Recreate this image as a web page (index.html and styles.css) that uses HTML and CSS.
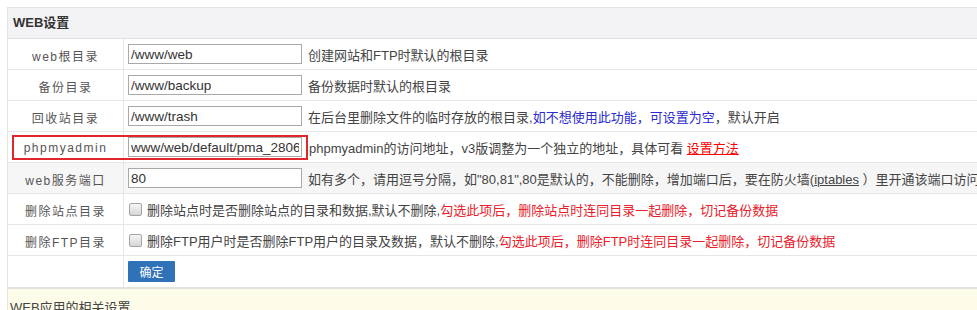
FILE: index.html
```html
<!DOCTYPE html>
<html lang="zh-CN">
<head>
    <meta charset="UTF-8">
    <title>WEB设置</title>
    <link rel="stylesheet" href="styles.css">
</head>
<body>
    <div class="page">
        <div class="panel">
            <!-- Заголовок -->
            <div class="panel-title">WEB设置</div>

            <div class="row">
                <div class="label">web根目录</div>
                <div class="value">
                    <input class="text-input" type="text" value="/www/web">
                    <span class="desc">创建网站和FTP时默认的根目录</span>
                </div>
            </div>

            <div class="row">
                <div class="label">备份目录</div>
                <div class="value">
                    <input class="text-input" type="text" value="/www/backup">
                    <span class="desc">备份数据时默认的根目录</span>
                </div>
            </div>

            <div class="row">
                <div class="label">回收站目录</div>
                <div class="value">
                    <input class="text-input" type="text" value="/www/trash">
                    <span class="desc">在后台里删除文件的临时存放的根目录,<span class="blue">如不想使用此功能，可设置为空</span>，默认开启</span>
                </div>
            </div>

            <div class="row">
                <div class="label">phpmyadmin</div>
                <div class="value">
                    <input class="text-input" type="text" value="www/web/default/pma_28060b1f2c">
                    <span class="desc desc-tight">phpmyadmin的访问地址，v3版调整为一个独立的地址，具体可看 <a class="red-link" href="#">设置方法</a></span>
                </div>
            </div>

            <div class="row row-hover">
                <div class="label">web服务端口</div>
                <div class="value">
                    <input class="text-input" type="text" value="80">
                    <span class="desc">如有多个，请用逗号分隔，如"80,81",80是默认的，不能删除，增加端口后，要在防火墙(<u>iptables</u> ）里开通该端口访问</span>
                </div>
            </div>

            <div class="row">
                <div class="label">删除站点目录</div>
                <div class="value">
                    <input class="check" type="checkbox">
                    <span class="desc desc-check">删除站点时是否删除站点的目录和数据,默认不删除,<span class="red">勾选此项后，删除站点时连同目录一起删除，切记备份数据</span></span>
                </div>
            </div>

            <div class="row">
                <div class="label">删除FTP目录</div>
                <div class="value">
                    <input class="check" type="checkbox">
                    <span class="desc desc-check">删除FTP用户时是否删除FTP用户的目录及数据，默认不删除,<span class="red">勾选此项后，删除FTP时连同目录一起删除，切记备份数据</span></span>
                </div>
            </div>

            <div class="row row-button">
                <div class="label"></div>
                <div class="value">
                    <button class="btn">确定</button>
                </div>
            </div>

            <!-- Подсказка -->
            <div class="notice">WEB应用的相关设置</div>

            <!-- Красная рамка вокруг phpmyadmin -->
            <div class="mark"></div>
        </div>
    </div>
</body>
</html>
```

FILE: styles.css
```css
html, body {
    overflow: hidden;
}

body {
    margin: 0;
    background-color: #fff;
    font-family: "Liberation Sans", "Noto Sans CJK SC", sans-serif;
    color: #444;
}

.page {
    padding: 7px 0 0 7px;
}

/* Блок настроек */
.panel {
    position: relative;
    width: 1200px;
    border: 1px solid #e4e4e4;
    border-bottom: none;
}

.panel-title {
    height: 30px;
    line-height: 30px;
    padding-left: 5px;
    background-color: #f3f3f5;
    border-bottom: 1px solid #e0e0e2;
    font-size: 13px;
    font-weight: bold;
    color: #333;
}

.row {
    display: flex;
    height: 31px;
    box-sizing: border-box;
    border-bottom: 1px solid #e6e6e6;
}

.row-hover {
    background-color: #f6f6f6;
}

.row-button {
    height: 33px;
    border-bottom: 2px solid #e2e2e2;
}

.label {
    width: 116px;
    flex-shrink: 0;
    box-sizing: border-box;
    border-right: 1px solid #e6e6e6;
    display: flex;
    align-items: center;
    justify-content: center;
    font-size: 12px;
    letter-spacing: 1.5px;
    color: #555;
    padding-top: 2px;
}

.value {
    display: flex;
    align-items: center;
    padding-left: 4px;
    white-space: nowrap;
}

.text-input {
    width: 174px;
    height: 20px;
    box-sizing: border-box;
    margin: 0;
    padding: 0 2px;
    border: 1px solid #a9a9a9;
    font-family: "Liberation Sans", sans-serif;
    font-size: 13.5px;
    color: #333;
    background: #fff;
    outline: none;
}

.desc {
    margin-left: 6px;
    font-size: 13px;
    color: #444;
}

.desc-tight {
    margin-left: 7px;
}

.desc-check {
    margin-left: 5px;
}

.blue {
    color: #2b2bcf;
}

.red {
    color: #e8202a;
}

.red-link {
    color: #f00;
    text-decoration: underline;
}

.check {
    appearance: none;
    -webkit-appearance: none;
    width: 13px;
    height: 13px;
    margin: 0 0 0 1px;
    border: 1px solid #a4a4a4;
    border-radius: 2px;
    background: linear-gradient(#f6f6f6, #d6d6d6);
}

.btn {
    width: 47px;
    height: 21px;
    padding: 0;
    border: none;
    border-radius: 1px;
    background-color: #2f72b8;
    color: #fff;
    font-family: "Noto Sans CJK SC", sans-serif;
    font-size: 12px;
    cursor: pointer;
}

.notice {
    height: 40px;
    padding: 8px 0 0 2px;
    box-sizing: border-box;
    background-color: #fdfce8;
    font-size: 13px;
    color: #444;
}

/* Красная рамка поверх строки */
.mark {
    position: absolute;
    left: 4px;
    top: 127px;
    width: 296px;
    height: 25px;
    box-sizing: border-box;
    border: 2px solid #e3262b;
}
```
